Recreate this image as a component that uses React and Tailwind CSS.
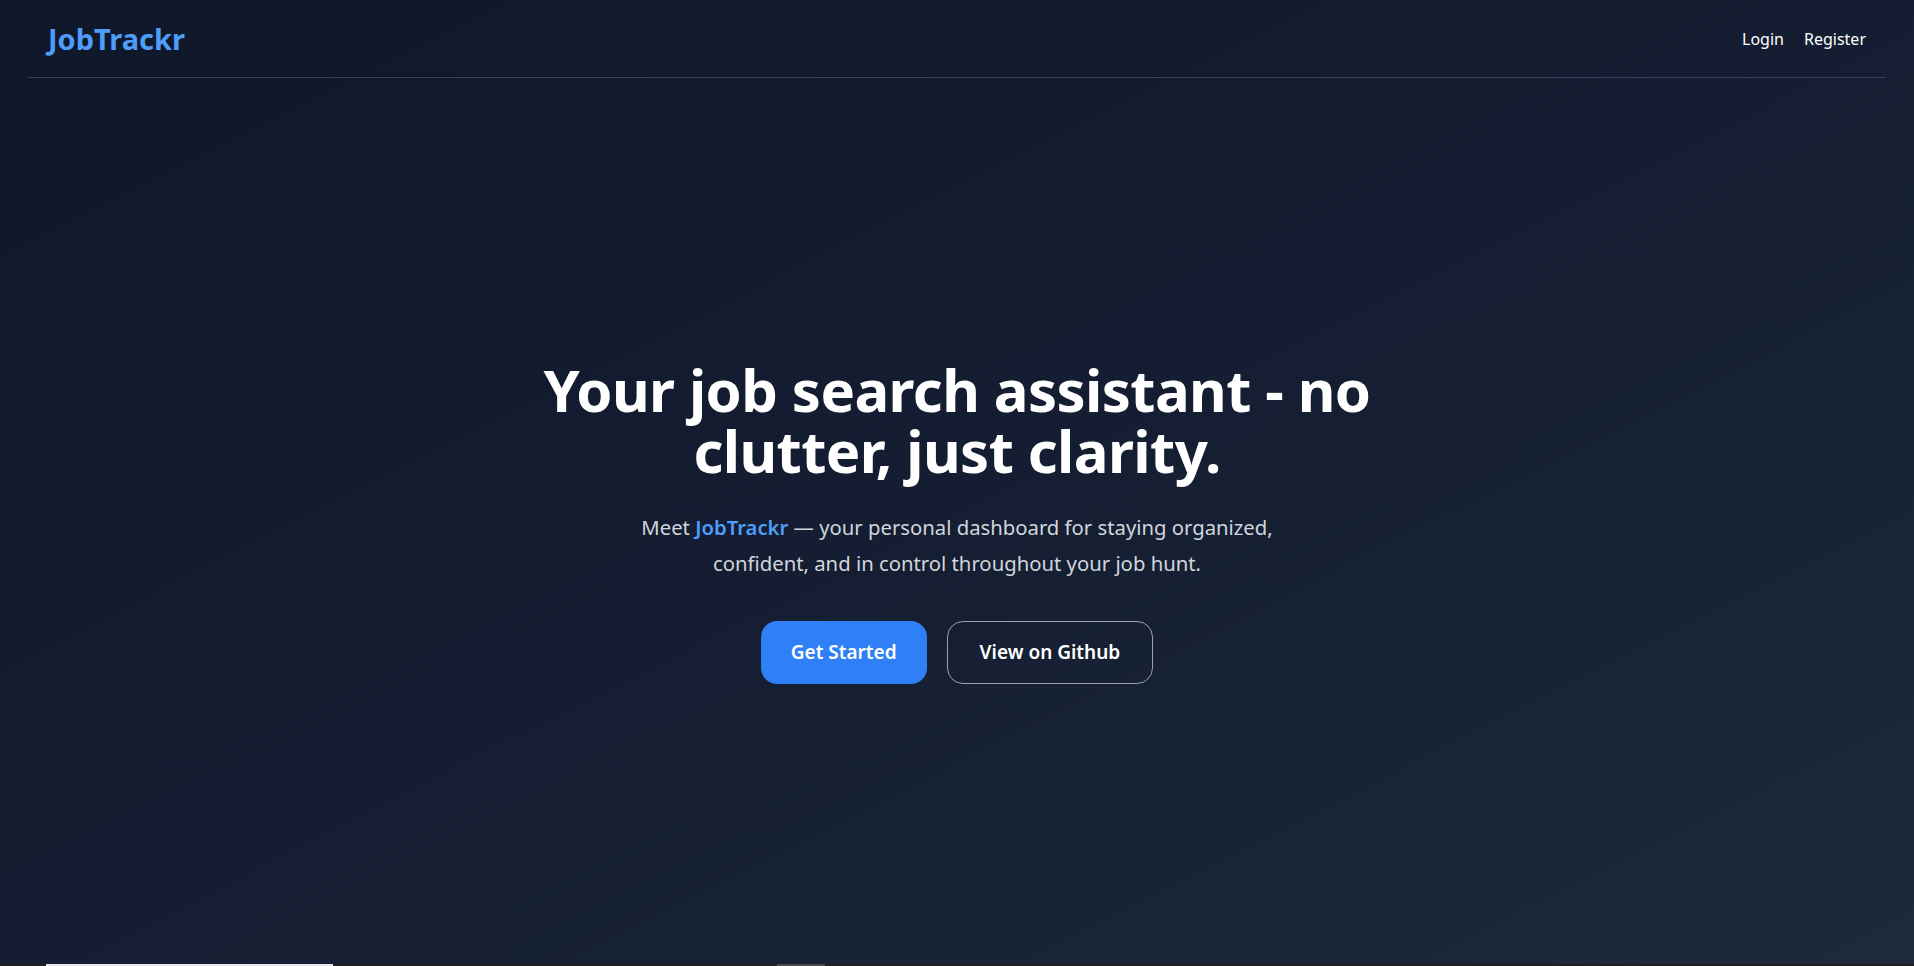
export default function App() {
  return (
    <div className="min-h-screen bg-[#1f1f1f] font-['Noto_Sans',sans-serif]">
      <div className="h-[964px] flex flex-col bg-linear-to-br from-[#0f172a] via-[#141d31] to-[#1e293b] text-white">
        {/* NAV */}
        <header className="mx-7 px-5 h-[78px] flex items-center justify-between border-b border-[#334155]">
          <h1 className="text-[29px] font-bold text-[#4d9df9]">JobTrackr</h1>
          <nav className="flex items-center gap-5 text-base">
            <a href="#">Login</a>
            <a href="#">Register</a>
          </nav>
        </header>

        {/* HERO */}
        <main className="flex-1 flex flex-col items-center justify-center text-center px-6">
          <h2 className="max-w-4xl text-[58px] leading-[61px] font-bold tracking-[-0.01em]">
            Your job search assistant - no clutter, just clarity.
          </h2>
          <p className="mt-7 max-w-2xl text-[20.3px] leading-9 text-gray-300">
            Meet <span className="text-[#4d9df9] font-semibold">JobTrackr</span> — your personal dashboard for
            staying organized, confident, and in control throughout your job hunt.
          </p>
          <div className="mt-10 flex gap-5">
            <button className="h-[63px] px-[30px] rounded-2xl bg-[#2f7ff6] text-[19px] font-semibold">
              Get Started
            </button>
            <button className="h-[63px] px-8 rounded-2xl border border-gray-400 text-[19px] font-semibold">
              View on Github
            </button>
          </div>
        </main>
      </div>

      {/* next section peeking in */}
      <div className="flex h-[2px] pl-[46px]">
        <div className="w-[287px] bg-gray-200" />
        <div className="ml-[444px] w-[48px] bg-[#4b4b4b]" />
      </div>
    </div>
  );
}
